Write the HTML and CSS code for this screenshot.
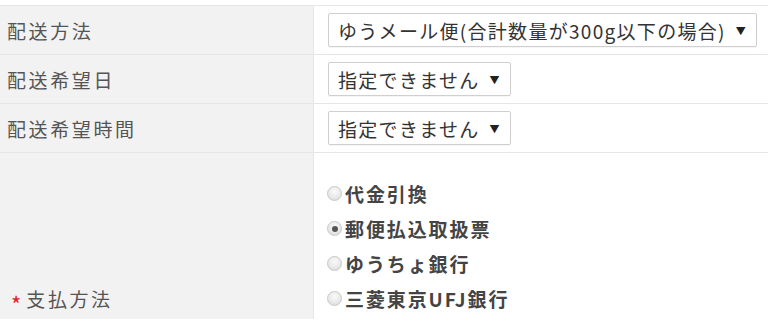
FILE: index.html
```html
<!DOCTYPE html>
<html lang="ja">
<head>
<meta charset="utf-8">
<link rel="stylesheet" href="styles.css">
</head>
<body>
<div class="form">
  <div class="row">
    <div class="label">配送方法</div>
    <div class="field">
      <div class="select">ゆうメール便(合計数量が300g以下の場合)<span class="arrow">▼</span></div>
    </div>
  </div>
  <div class="row">
    <div class="label">配送希望日</div>
    <div class="field">
      <div class="select">指定できません<span class="arrow">▼</span></div>
    </div>
  </div>
  <div class="row">
    <div class="label">配送希望時間</div>
    <div class="field">
      <div class="select">指定できません<span class="arrow">▼</span></div>
    </div>
  </div>
  <div class="row row-pay">
    <div class="label label-bottom"><span class="req">*</span>支払方法</div>
    <div class="field field-radios">
      <label class="radio"><span class="dot"></span>代金引換</label>
      <label class="radio"><span class="dot checked"></span>郵便払込取扱票</label>
      <label class="radio"><span class="dot"></span>ゆうちょ銀行</label>
      <label class="radio"><span class="dot"></span>三菱東京UFJ銀行</label>
    </div>
  </div>
</div>
</body>
</html>
```

FILE: styles.css
```css
html, body {
  margin: 0;
  padding: 0;
  background: #ffffff;
}
body {
  font-family: "Noto Sans CJK JP", "Noto Sans", sans-serif;
  font-size: 19px;
  color: #333;
  padding-top: 5px;
  overflow: hidden;
  height: 321px;
}
.form {
  border-top: 1px solid #e6e6e6;
}
.row {
  display: flex;
  border-bottom: 1px solid #e6e6e6;
}
.label {
  width: 306px;
  flex: none;
  background: #f2f2f2;
  border-right: 1px solid #e6e6e6;
  padding-left: 7px;
  display: flex;
  align-items: center;
  color: #555;
  letter-spacing: 2.6px;
}
.field {
  flex: 1;
  padding: 7px 0 7px 14px;
}
.select {
  display: inline-flex;
  align-items: center;
  height: 32px;
  border: 1px solid #cfcfcf;
  border-radius: 2px;
  background: #fff;
  padding: 0 10px 0 9px;
  letter-spacing: 1.3px;
  color: #333;
  box-shadow: 0 1px 1px rgba(0,0,0,0.04);
}
.arrow {
  font-size: 10px;
  letter-spacing: 0;
  margin-left: 10px;
  color: #222;
}
.row-pay {
  border-bottom: none;
}
.label-bottom {
  align-items: flex-end;
  padding-bottom: 3px;
  line-height: 35px;
}
.req {
  color: #e4202a;
  font-size: 22px;
  letter-spacing: 0;
  margin: 0 5px 0 4px;
  position: relative;
  top: 5px;
}
.field-radios {
  display: flex;
  flex-direction: column;
  padding: 23px 0 3px 13px;
}
.radio {
  display: flex;
  align-items: center;
  height: 35px;
  font-weight: 700;
  color: #444;
  letter-spacing: 1.9px;
}
.dot {
  width: 13px;
  height: 13px;
  border-radius: 50%;
  border: 1px solid #c8c8c8;
  background: radial-gradient(circle at 50% 35%, #fafafa 0%, #e9e9e9 55%, #d6d6d6 100%);
  margin-right: 3px;
  flex: none;
  position: relative;
}
.dot.checked::after {
  content: "";
  position: absolute;
  left: 3.5px;
  top: 3.5px;
  width: 6px;
  height: 6px;
  border-radius: 50%;
  background: #555;
}
```
